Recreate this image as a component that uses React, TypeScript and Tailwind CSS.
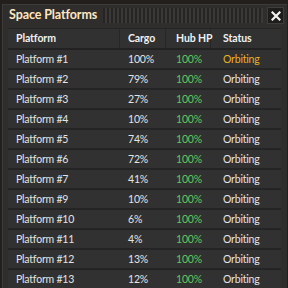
const rows = [
  { name: "Platform #1", cargo: "100%", hp: "100%", status: "Orbiting", active: true },
  { name: "Platform #2", cargo: "79%", hp: "100%", status: "Orbiting" },
  { name: "Platform #3", cargo: "27%", hp: "100%", status: "Orbiting" },
  { name: "Platform #4", cargo: "10%", hp: "100%", status: "Orbiting" },
  { name: "Platform #5", cargo: "74%", hp: "100%", status: "Orbiting" },
  { name: "Platform #6", cargo: "72%", hp: "100%", status: "Orbiting" },
  { name: "Platform #7", cargo: "41%", hp: "100%", status: "Orbiting" },
  { name: "Platform #9", cargo: "10%", hp: "100%", status: "Orbiting" },
  { name: "Platform #10", cargo: "6%", hp: "100%", status: "Orbiting" },
  { name: "Platform #11", cargo: "4%", hp: "100%", status: "Orbiting" },
  { name: "Platform #12", cargo: "13%", hp: "100%", status: "Orbiting" },
  { name: "Platform #13", cargo: "12%", hp: "100%", status: "Orbiting" },
];

export default function App() {
  return (
    <div className="w-[288px] h-[288px] overflow-hidden bg-[#221f1c] font-['Lato',sans-serif]">
      <div className="ml-[2px] mt-[4px] h-[284px] w-[285px] bg-[#2f2e2d] border-t border-l border-[#3d3b39] flex flex-col">
        {/* title bar */}
        <div className="flex items-start h-[23px] pt-[2px] pl-[6px] pr-[3px] shrink-0">
          <span className="mt-[2px] text-[12.5px] font-bold tracking-[-0.1px] text-[#ffe6c0] leading-none whitespace-nowrap">Space Platforms</span>
          <div className="flex-1 h-[15px] mt-[1px] ml-[6px] mr-[4px] bg-[repeating-linear-gradient(90deg,#262524_0px,#262524_2px,#3a3938_2px,#3a3938_4px)]" />
          <button className="w-[17px] h-[17px] bg-[#1e1d1c] border border-[#3e3d3c] flex items-center justify-center">
            <svg width="10" height="10" viewBox="0 0 10 10">
              <path d="M1.5 1.5 L8.5 8.5 M8.5 1.5 L1.5 8.5" stroke="#f2f2f2" strokeWidth="2.2" strokeLinecap="square" />
            </svg>
          </button>
        </div>

        {/* table */}
        <div className="ml-[5px] w-[273px] flex-1 bg-[#313131] shadow-[inset_0_1px_0_#242424]">
          <div className="flex h-[22px] items-center pt-[1px] text-[10.5px] font-bold tracking-[-0.1px] text-[#f0f0f0] border-b-2 border-[#222222] whitespace-nowrap">
            <div className="w-[112px] pl-[8px] h-full flex items-center border-r border-[#262626]">Platform</div>
            <div className="w-[46px] pl-[8px] h-full flex items-center border-r border-[#262626]">Cargo</div>
            <div className="w-[45px] pl-[10px] h-full flex items-center border-r border-[#262626]">Hub HP</div>
            <div className="flex-1 pl-[12px] h-full flex items-center">Status</div>
          </div>
          {rows.map((r) => (
            <div
              key={r.name}
              className="flex h-[20px] items-center pt-[1px] text-[10.5px] tracking-[-0.2px] text-[#e4e4e4] border-b-2 border-[#242424] whitespace-nowrap"
            >
              <div className="w-[112px] pl-[8px]">{r.name}</div>
              <div className="w-[46px] pl-[8px]">{r.cargo}</div>
              <div className="w-[45px] pl-[10px] text-[#5ec95e]">{r.hp}</div>
              <div className={r.active ? "flex-1 pl-[12px] text-[#e8b320]" : "flex-1 pl-[12px]"}>{r.status}</div>
            </div>
          ))}
        </div>
      </div>
    </div>
  );
}
